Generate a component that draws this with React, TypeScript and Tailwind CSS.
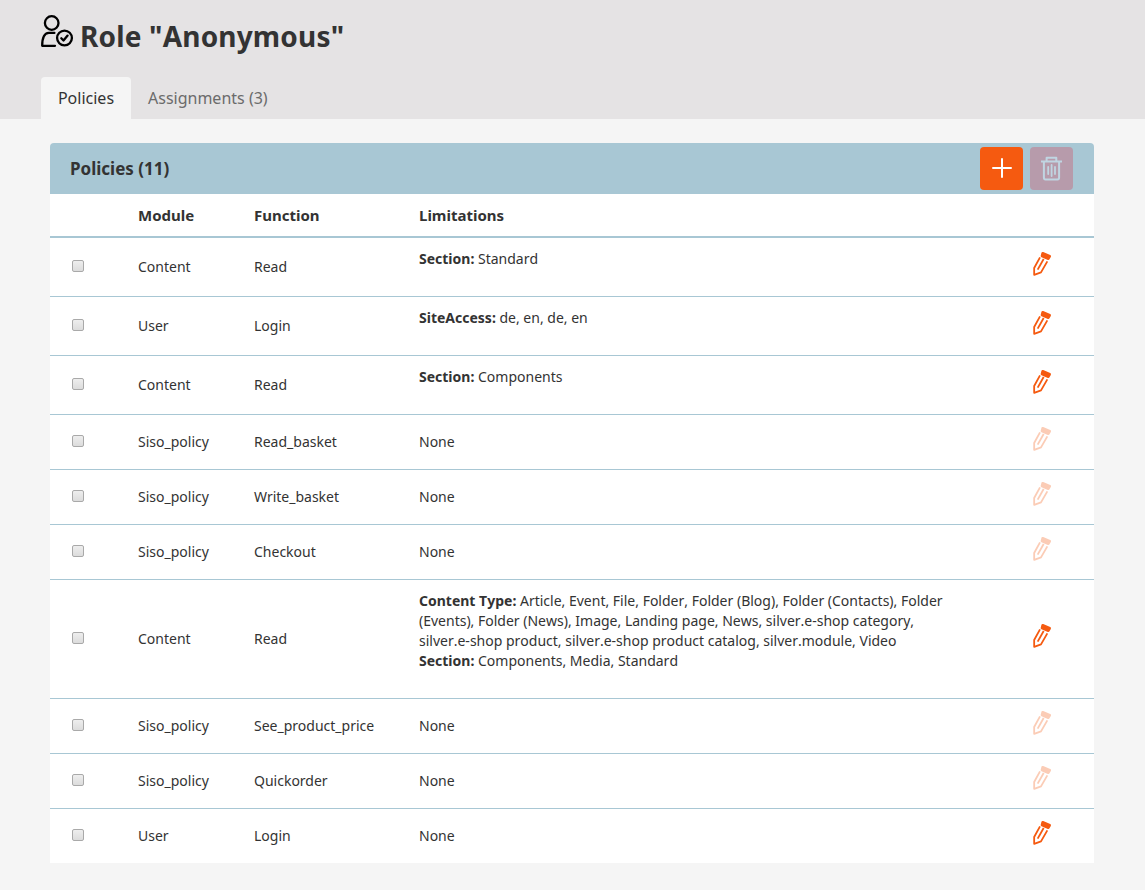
type Limitation = { name: string; value: string };
type Policy = { module: string; fn: string; limitations?: Limitation[]; editable: boolean };

const policies: Policy[] = [
  { module: 'Content', fn: 'Read', limitations: [{ name: 'Section', value: 'Standard' }], editable: true },
  { module: 'User', fn: 'Login', limitations: [{ name: 'SiteAccess', value: 'de, en, de, en' }], editable: true },
  { module: 'Content', fn: 'Read', limitations: [{ name: 'Section', value: 'Components' }], editable: true },
  { module: 'Siso_policy', fn: 'Read_basket', editable: false },
  { module: 'Siso_policy', fn: 'Write_basket', editable: false },
  { module: 'Siso_policy', fn: 'Checkout', editable: false },
  {
    module: 'Content',
    fn: 'Read',
    limitations: [
      {
        name: 'Content Type',
        value:
          'Article, Event, File, Folder, Folder (Blog), Folder (Contacts), Folder (Events), Folder (News), Image, Landing page, News, silver.e-shop category, silver.e-shop product, silver.e-shop product catalog, silver.module, Video',
      },
      { name: 'Section', value: 'Components, Media, Standard' },
    ],
    editable: true,
  },
  { module: 'Siso_policy', fn: 'See_product_price', editable: false },
  { module: 'Siso_policy', fn: 'Quickorder', editable: false },
  { module: 'User', fn: 'Login', editable: true },
];

function RoleIcon() {
  return (
    <svg className="h-[34px] w-[34px] shrink-0" viewBox="0 0 34 34" fill="none" stroke="#000" strokeWidth="2.3" strokeLinecap="round" strokeLinejoin="round">
      <circle cx="11.7" cy="9" r="6.8" />
      <path d="M15 31.8H2.2C2.2 25.5 3.8 19.2 8.8 18.9H14.4" />
      <circle cx="24.5" cy="24" r="7.4" />
      <path d="M21.3 24.3L23.5 26.5L27.6 21.6" />
    </svg>
  );
}

function PencilIcon({ faded }: { faded: boolean }) {
  return (
    <svg className={faded ? 'h-[26px] w-5 opacity-30' : 'h-[26px] w-5'} viewBox="216 60 60 78" fill="none" stroke="#f55a10" strokeWidth="5.4" strokeLinejoin="round">
      <path d="M248 67L269 76L265 83L246 75Z" fill="#f55a10" strokeWidth="8" />
      <path d="M240 79L222.5 111V131.5L243 124L262 91" />
      <path d="M251 84L233 116" />
    </svg>
  );
}

function PlusIcon() {
  return (
    <svg className="mb-px h-5 w-5" viewBox="0 0 20 20" stroke="#fff" strokeWidth="2" strokeLinecap="round">
      <path d="M10 1V19M1 10H19" />
    </svg>
  );
}

function TrashIcon() {
  return (
    <svg className="mb-px h-[25px] w-[23px]" viewBox="0 0 23 25" fill="none" stroke="#c0d5e2" strokeWidth="2" strokeLinejoin="round">
      <path d="M1 5.6H22M6.6 5.4V1.7H16.3V5.4M3.9 5.8V21.5Q3.9 23.5 5.5 23.5H17.5Q19.1 23.5 19.1 21.5V5.8" />
      <path d="M8.2 11V18M11.6 9V20M15 11V18" strokeWidth="1.8" strokeLinecap="round" />
    </svg>
  );
}

function PolicyRow({ policy }: { policy: Policy }) {
  return (
    <div className="grid grid-cols-[88px_116px_165px_535px_1fr] items-center border-b border-[#a8c7d4] last:border-b-0">
      <div className="pb-0.5 pl-[22px]">
        <button role="checkbox" aria-checked="false" aria-label="Select policy" className="block h-3 w-3 rounded-[2px] border border-[#a9a9a9] bg-linear-to-b from-[#eeeeee] to-[#dcdcdc]" />
      </div>
      <div>{policy.module}</div>
      <div>{policy.fn}</div>
      {policy.limitations ? (
        <div className="pt-[11px] pb-[27px] [font-kerning:none]">
          {policy.limitations.map((l) => (
            <p key={l.name}>
              <strong className="font-bold">{l.name}:</strong> {l.value}
            </p>
          ))}
        </div>
      ) : (
        <div className="py-[17px]">None</div>
      )}
      <div className="pb-1.5 pl-[78px]">
        <PencilIcon faded={!policy.editable} />
      </div>
    </div>
  );
}

export default function App() {
  return (
    <div className="h-[890px] bg-[#f5f5f5] font-['Noto_Sans',sans-serif] text-sm leading-5 text-[#333333]">
      <header className="flex h-[119px] flex-col justify-between bg-[#e5e3e4] pl-10">
        <div className="flex gap-1.5 pt-3.5">
          <RoleIcon />
          <h1 className="pt-[3px] text-[28px] leading-[38px] font-bold tracking-[0.18px] [font-kerning:none]">Role "Anonymous"</h1>
        </div>
        <nav className="flex pl-px text-base leading-6">
          <a className="flex h-[42px] w-[90px] items-center justify-center rounded-t bg-[#f5f5f5]">Policies</a>
          <a className="flex h-[42px] items-center px-[17px] text-[#6b6b6b]">Assignments (3)</a>
        </nav>
      </header>
      <main className="pt-6 pr-[51px] pl-[50px]">
        <div className="flex h-[51px] items-center justify-between rounded-t bg-[#a8c7d4] pr-[21px] pl-5">
          <h2 className="text-[17px] leading-6 font-bold">Policies (11)</h2>
          <div className="flex gap-[7px]">
            <button aria-label="Add policy" className="flex h-[43px] w-[43px] items-center justify-center rounded bg-[#f55a10]">
              <PlusIcon />
            </button>
            <button aria-label="Delete policies" className="flex h-[43px] w-[43px] items-center justify-center rounded bg-[#b79bab]">
              <TrashIcon />
            </button>
          </div>
        </div>
        <div className="bg-white">
          <div className="grid h-11 grid-cols-[88px_116px_165px_1fr] items-center border-b-2 border-[#a8c7d4] text-[15px] font-bold">
            <div />
            <div>Module</div>
            <div>Function</div>
            <div>Limitations</div>
          </div>
          {policies.map((p, i) => (
            <PolicyRow key={i} policy={p} />
          ))}
        </div>
      </main>
    </div>
  );
}
